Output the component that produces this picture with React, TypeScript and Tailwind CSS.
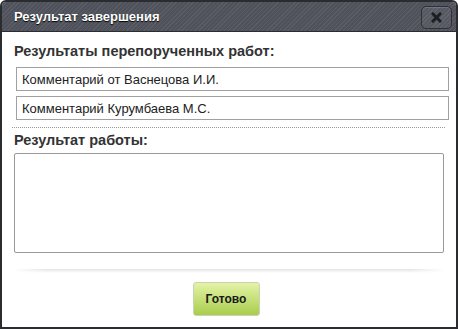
import React from "react";

export default function App() {
  return (
    <div className="w-[458px] h-[329px] bg-white font-['Liberation_Sans',Arial,sans-serif]">
      <div className="w-full h-full border-2 border-[#2b2c30] rounded-t-[6px] flex flex-col overflow-hidden">
        <div className="h-[30px] shrink-0 flex items-center justify-between pl-3 pr-[4px] border-b border-[#2b2c30] bg-[repeating-linear-gradient(135deg,#5a5d66_0px,#5a5d66_1px,#4f525a_1px,#4f525a_3px)]">
          <span className="text-white font-bold text-[13px] leading-4 [text-shadow:0_1px_1px_#000]">
            Результат завершения
          </span>
          <button className="w-[31px] h-[23px] mt-[1px] rounded-[5px] border border-[#2f3136] shadow-[inset_0_1px_0_rgba(255,255,255,0.15)] bg-[repeating-linear-gradient(135deg,#62656e_0px,#62656e_1px,#565961_1px,#565961_3px)] flex items-center justify-center">
            <svg width="11" height="11" viewBox="0 0 11 11">
              <path d="M2 2 L9 9 M9 2 L2 9" stroke="#1e1f22" strokeWidth="3" strokeLinecap="square" />
            </svg>
          </button>
        </div>
        <div className="flex-1 flex flex-col px-3">
          <div className="mt-[11px] text-[14.5px] leading-4 font-bold text-[#333]">
            Результаты перепорученных работ:
          </div>
          <div className="mt-[8px] ml-[2px] -mr-[5px] flex flex-col gap-[5px]">
            <div className="h-6 border border-[#a0a0a0] flex items-center pl-[5px] pt-[2px] text-[13px] text-[#222]">
              Комментарий от Васнецова И.И.
            </div>
            <div className="h-6 border border-[#a0a0a0] flex items-center pl-[5px] pt-[2px] text-[13px] text-[#222]">
              Комментарий Курумбаева М.С.
            </div>
          </div>
          <div className="mt-[7px] -ml-[2px] -mr-[1px] border-t border-dotted border-[#999]" />
          <div className="mt-[4px] text-[14.5px] leading-4 font-bold text-[#333]">
            Результат работы:
          </div>
          <div className="mt-[5px] h-[100px] border border-[#999] rounded-[2px] bg-white" />
          <div className="mt-[16px] -mx-[2px] h-[4px] bg-[linear-gradient(to_bottom,#e4e4e4,#fff)] [mask-image:linear-gradient(to_right,transparent,#000_8%,#000_92%,transparent)]" />
          <div className="flex justify-center mt-[9px] pr-[6px]">
            <button className="w-[67px] h-[34px] rounded-[3px] border border-[#c9d3b4] bg-[linear-gradient(to_bottom,#e3f3a6,#a9cd4c)] text-[12px] font-bold text-[#1a1a1a]">
              Готово
            </button>
          </div>
        </div>
      </div>
    </div>
  );
}
